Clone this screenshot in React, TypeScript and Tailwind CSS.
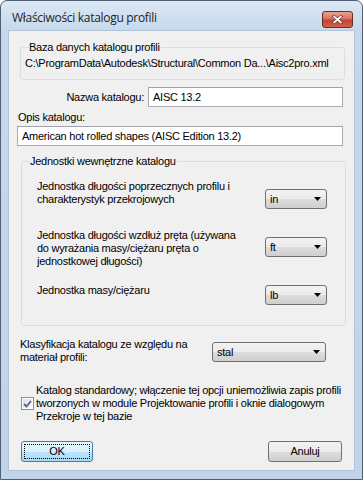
import React from 'react';

const font = "font-['Liberation_Sans',Arial,sans-serif] text-[11px] leading-[13px] tracking-[-0.25px] text-black";

function Select({ value, width }: { value: string; width: string }) {
  return (
    <div
      className={`${width} h-[20px] flex items-center justify-between rounded-[3px] border border-[#707070] bg-[linear-gradient(#f2f2f2_0%,#ebebeb_50%,#dddddd_51%,#cfcfcf_100%)] pl-[4px] pr-[5px] shrink-0`}
    >
      <span>{value}</span>
      <svg width="7" height="4" viewBox="0 0 7 4">
        <path d="M0 0h7L3.5 4z" fill="#000" />
      </svg>
    </div>
  );
}

function TextBox({ value, className }: { value: string; className: string }) {
  return (
    <div className={`${className} h-[20px] flex items-center border border-[#abadb3] border-t-[#a0a3aa] bg-white px-[4px]`}>
      {value}
    </div>
  );
}

function Button({ label, focused, width }: { label: string; focused?: boolean; width: string }) {
  return (
    <div
      className={`${width} h-[21px] rounded-[3px] border p-[2px] ${
        focused
          ? 'border-[#3c7fb1] bg-[linear-gradient(#eaf6fd_0%,#d9f0fc_50%,#bee6fd_51%,#a7d9f5_100%)]'
          : 'border-[#707070] bg-[linear-gradient(#f2f2f2_0%,#ebebeb_50%,#dddddd_51%,#cfcfcf_100%)]'
      }`}
    >
      <div
        className={`h-full flex items-center justify-center ${focused ? 'border border-dotted border-black' : 'border border-transparent'}`}
      >
        {label}
      </div>
    </div>
  );
}

export default function App() {
  return (
    <div className="w-[363px] h-[480px] flex flex-col rounded-t-[7px] border border-[#4f6072] bg-[linear-gradient(#dbe7f4_0px,#c6d8ed_30px,#c1d3e9_100%)] overflow-hidden">
      {/* Title bar */}
      <div className="h-[29px] shrink-0 flex items-start justify-between pl-[11px] pr-[9px]">
        <span className="mt-[9px] font-['Open_Sans','Noto_Sans',sans-serif] text-[12px] leading-[16px] tracking-[-0.3px] text-[#1e1e1e]">
          Właściwości katalogu profili
        </span>
        <div className="mt-[10px] w-[31px] h-[17px] rounded-[3px] border border-[#6d2a24] bg-[linear-gradient(#e8a394_0%,#d8715f_45%,#c4432f_55%,#d0644c_100%)] flex items-center justify-center">
          <svg width="11" height="9" viewBox="0 0 11 9">
            <path d="M1 0.5L10 8.5M10 0.5L1 8.5" stroke="#5a1e18" strokeWidth="3" />
            <path d="M1.5 1L9.5 8M9.5 1L1.5 8" stroke="#fff" strokeWidth="1.8" />
          </svg>
        </div>
      </div>

      {/* Client area */}
      <div className={`${font} mx-[7px] mb-[8px] flex-1 flex flex-col bg-[#f0f0f0] border border-[#b4c4d6]`}>
        <fieldset className="ml-[11px] mt-[10px] w-[325px] rounded-[3px] border border-[#d5dfe5] pl-[4px] pt-[3px] pb-[9px]">
          <legend className="ml-[3px] px-[1px]">Baza danych katalogu profili</legend>
          <div className="whitespace-nowrap">C:\ProgramData\Autodesk\Structural\Common Da...\Aisc2pro.xml</div>
        </fieldset>

        <div className="mt-[7px] flex items-center">
          <span className="w-[135px] text-right">Nazwa katalogu:</span>
          <TextBox value="AISC 13.2" className="ml-[4px] w-[195px]" />
        </div>

        <div className="mt-[4px] ml-[9px]">Opis katalogu:</div>
        <TextBox value="American hot rolled shapes (AISC Edition 13.2)" className="mt-[2px] ml-[8px] w-[326px]" />

        <fieldset className="ml-[12px] mt-[9px] w-[325px] rounded-[3px] border border-[#d5dfe5] pl-[15px] pt-[12px] pb-[20px]">
          <legend className="ml-[-8px] px-[1px]">Jednostki wewnętrzne katalogu</legend>
          <div className="flex items-start">
            <div className="w-[228px]">
              Jednostka długości poprzecznych profilu i<br />
              charakterystyk przekrojowych
            </div>
            <div className="mt-[9px]">
              <Select value="in" width="w-[62px]" />
            </div>
          </div>
          <div className="mt-[20px] flex items-start">
            <div className="w-[228px]">
              Jednostka długości wzdłuż pręta (używana<br />
              do wyrażania masy/ciężaru pręta o<br />
              jednostkowej długości)
            </div>
            <div className="mt-[8px]">
              <Select value="ft" width="w-[62px]" />
            </div>
          </div>
          <div className="mt-[16px] flex items-start">
            <div className="w-[228px]">Jednostka masy/ciężaru</div>
            <div className="mt-[1px]">
              <Select value="lb" width="w-[62px]" />
            </div>
          </div>
        </fieldset>

        <div className="mt-[12px] ml-[11px] flex items-start">
          <div className="w-[192px]">
            Klasyfikacja katalogu ze względu na<br />
            materiał profili:
          </div>
          <div className="mt-[4px]">
            <Select value="stal" width="w-[114px]" />
          </div>
        </div>

        <div className="mt-[20px] ml-[12px] flex items-center">
          <div className="w-[13px] h-[13px] shrink-0 border border-[#8e8f8f] bg-white p-[1px]">
            <div className="w-full h-full bg-[linear-gradient(135deg,#dcdcdc,#fbfbfb)] flex items-center justify-center">
              <svg width="9" height="8" viewBox="0 0 9 8">
                <path d="M1 4l2.5 2.5L8 1" stroke="#4a5f97" strokeWidth="1.8" fill="none" />
              </svg>
            </div>
          </div>
          <div className="ml-[2px] whitespace-nowrap">
            Katalog standardowy; włączenie tej opcji uniemożliwia zapis profili<br />
            tworzonych w module Projektowanie profili i oknie dialogowym<br />
            Przekroje w tej bazie
          </div>
        </div>

        <div className="mt-[18px] mx-[12px] flex justify-between">
          <Button label="OK" focused width="w-[72px]" />
          <Button label="Anuluj" width="w-[74px]" />
        </div>
      </div>
    </div>
  );
}
